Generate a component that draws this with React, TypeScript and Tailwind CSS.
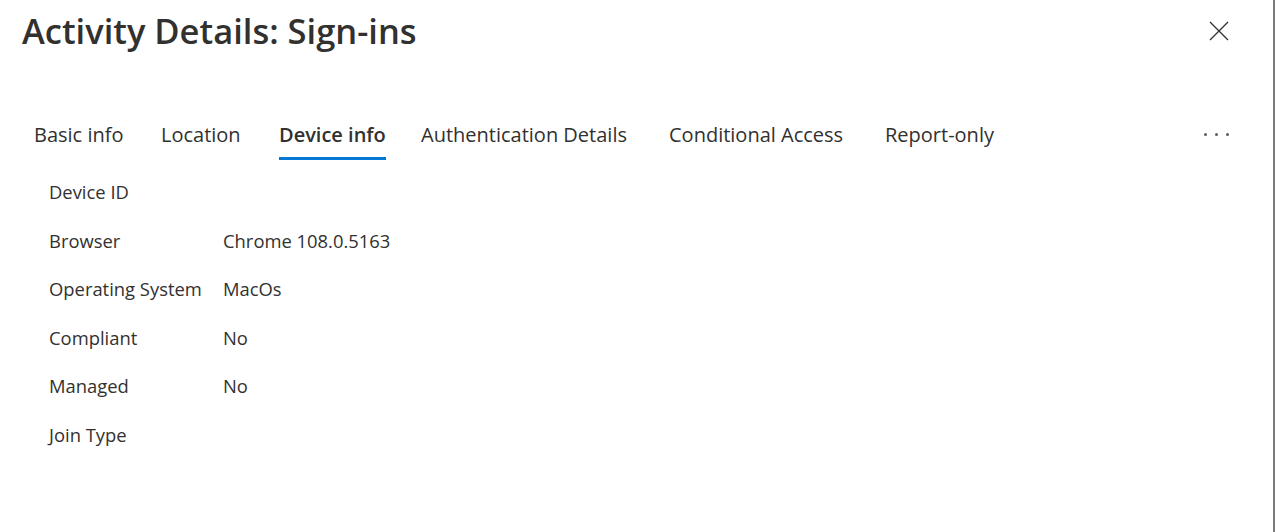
import React from "react";

// Onglets avec la largeur de leur emplacement
const tabs = [
  { label: "Basic info", slot: "w-[127px]" },
  { label: "Location", slot: "w-[118px]" },
  { label: "Device info", slot: "w-[142px]" },
  { label: "Authentication Details", slot: "w-[248px]" },
  { label: "Conditional Access", slot: "w-[216px]" },
  { label: "Report-only", slot: "w-[120px]" },
];

const rows: [string, string][] = [
  ["Device ID", ""],
  ["Browser", "Chrome 108.0.5163"],
  ["Operating System", "MacOs"],
  ["Compliant", "No"],
  ["Managed", "No"],
  ["Join Type", ""],
];

export default function App() {
  const active = "Device info";
  return (
    <div
      className="w-[1275px] h-[532px] bg-white border-r-2 border-[#7a7a7a] text-[#323130] overflow-hidden"
      style={{ fontFamily: '"Open Sans", "Noto Sans", sans-serif' }}
    >
      {/* En-tête */}
      <div className="flex items-start justify-between pl-[22px] pr-[44px] pt-[8px]">
        <h1 className="text-[34.5px] leading-[46px] font-semibold">
          Activity Details: Sign-ins
        </h1>
        <button className="mt-[13px] w-[20px] h-[20px] flex items-center justify-center" title="Close">
          <svg width="20" height="20" viewBox="0 0 20 20">
            <path d="M1 1 L19 19 M19 1 L1 19" stroke="#323130" strokeWidth="1.3" fill="none" />
          </svg>
        </button>
      </div>

      {/* Onglets */}
      <div className="flex items-center justify-between pl-[34px] pr-[44px] mt-[58px]">
        <div className="flex">
          {tabs.map((t) => (
            <div key={t.label} className={`${t.slot} h-[45px] flex items-center`}>
              <span
                className={`relative h-[45px] flex items-center text-[20px] ${
                  t.label === active ? "font-semibold" : ""
                }`}
              >
                {t.label}
                {t.label === active && (
                  <span className="absolute left-0 right-0 bottom-[-3px] h-[3px] bg-[#0078d4]" />
                )}
              </span>
            </div>
          ))}
        </div>
        <div className="flex gap-[8px]">
          <span className="w-[3px] h-[3px] rounded-full bg-[#605e5c]" />
          <span className="w-[3px] h-[3px] rounded-full bg-[#605e5c]" />
          <span className="w-[3px] h-[3px] rounded-full bg-[#605e5c]" />
        </div>
      </div>

      {/* Détails de l'appareil */}
      <div className="pl-[49px] pt-[11px] flex flex-col">
        {rows.map(([label, value]) => (
          <div key={label} className="flex h-[48.5px] items-center text-[18.4px]">
            <div className="w-[174px]">{label}</div>
            <div>{value}</div>
          </div>
        ))}
      </div>
    </div>
  );
}
